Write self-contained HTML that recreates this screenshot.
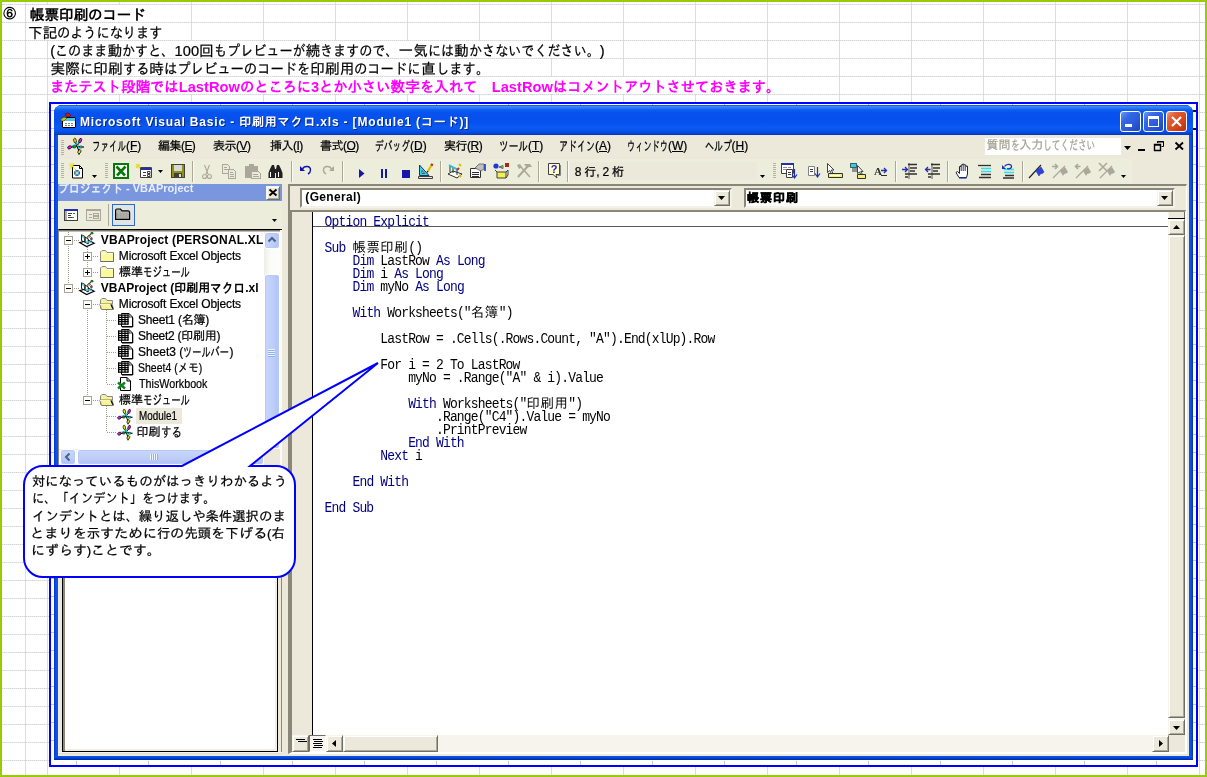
<!DOCTYPE html>
<html lang="ja"><head><meta charset="utf-8"><title>帳票印刷のコード</title>
<style>
*{box-sizing:border-box}
html,body{margin:0;padding:0}
body{width:1207px;height:777px;overflow:hidden;background:#fff;position:relative;
 font-family:"Liberation Sans","IPAGothic",sans-serif;color:#000}
.a{position:absolute}
.t{position:absolute;white-space:pre;line-height:1;-webkit-text-stroke:0.22px currentColor}
.ui{font-size:12px}
.k{display:inline-block;white-space:pre;vertical-align:baseline}
.k>span{display:inline-block;transform-origin:0 50%;white-space:pre}
.gl{position:absolute;background:#dcdce0}
.gh{position:absolute;left:2px;width:1203px;height:1px;background:repeating-linear-gradient(to right,#d4d4dc 0,#d4d4dc 1px,#e8e8ee 1px,#e8e8ee 2px)}
.beige{background:#ece8da}
.tbg{background:#ededdc}
.sep{position:absolute;width:1px;background:#aca899;box-shadow:1px 0 0 #fbfaf4}
.grip{position:absolute;width:3px;background:repeating-linear-gradient(to bottom,#b5b2a0 0,#b5b2a0 1px,transparent 1px,transparent 2px)}
.btn{position:absolute;background:#ece8da;border:1px solid;border-color:#f7f6ee #716f64 #716f64 #f7f6ee;box-shadow:inset 1px 1px 0 #fff,inset -1px -1px 0 #aca899}
.code{position:absolute;white-space:pre;font-family:"Liberation Mono","IPAGothic",monospace;font-size:13px;line-height:13px;letter-spacing:-0.84px;color:#000;height:13px;transform:scaleY(1.16);transform-origin:0 9.96px}
.code b{font-weight:normal;color:#000080}
.code i{font-style:normal;font-size:13.4px;letter-spacing:0.56px;display:inline-block;transform:scaleY(.88);transform-origin:0 78%;color:#000}
svg{position:absolute;overflow:visible}
</style></head>
<body>
<div id="root" style="position:absolute;left:0;top:0;width:1207px;height:777px;will-change:transform">
<!-- sheet gridlines -->
<div class="gh" style="top:4px"></div><div class="gh" style="top:22px"></div><div class="gh" style="top:40px"></div><div class="gh" style="top:58px"></div><div class="gh" style="top:76px"></div><div class="gh" style="top:94px"></div><div class="gh" style="top:112px"></div><div class="gh" style="top:130px"></div><div class="gh" style="top:148px"></div><div class="gh" style="top:166px"></div><div class="gh" style="top:184px"></div><div class="gh" style="top:202px"></div><div class="gh" style="top:220px"></div><div class="gh" style="top:238px"></div><div class="gh" style="top:256px"></div><div class="gh" style="top:274px"></div><div class="gh" style="top:292px"></div><div class="gh" style="top:310px"></div><div class="gh" style="top:328px"></div><div class="gh" style="top:346px"></div><div class="gh" style="top:364px"></div><div class="gh" style="top:382px"></div><div class="gh" style="top:400px"></div><div class="gh" style="top:418px"></div><div class="gh" style="top:436px"></div><div class="gh" style="top:454px"></div><div class="gh" style="top:472px"></div><div class="gh" style="top:490px"></div><div class="gh" style="top:508px"></div><div class="gh" style="top:526px"></div><div class="gh" style="top:544px"></div><div class="gh" style="top:562px"></div><div class="gh" style="top:580px"></div><div class="gh" style="top:598px"></div><div class="gh" style="top:616px"></div><div class="gh" style="top:634px"></div><div class="gh" style="top:652px"></div><div class="gh" style="top:670px"></div><div class="gh" style="top:688px"></div><div class="gh" style="top:706px"></div><div class="gh" style="top:724px"></div><div class="gh" style="top:742px"></div><div class="gh" style="top:760px"></div><div class="gl" style="left:25px;top:2px;width:1px;height:773px"></div><div class="gl" style="left:47px;top:2px;width:1px;height:773px"></div><div class="gl" style="left:119px;top:2px;width:1px;height:773px"></div><div class="gl" style="left:191px;top:2px;width:1px;height:773px"></div><div class="gl" style="left:263px;top:2px;width:1px;height:773px"></div><div class="gl" style="left:335px;top:2px;width:1px;height:773px"></div><div class="gl" style="left:407px;top:2px;width:1px;height:773px"></div><div class="gl" style="left:479px;top:2px;width:1px;height:773px"></div><div class="gl" style="left:551px;top:2px;width:1px;height:773px"></div><div class="gl" style="left:623px;top:2px;width:1px;height:773px"></div><div class="gl" style="left:695px;top:2px;width:1px;height:773px"></div><div class="gl" style="left:767px;top:2px;width:1px;height:773px"></div><div class="gl" style="left:839px;top:2px;width:1px;height:773px"></div><div class="gl" style="left:911px;top:2px;width:1px;height:773px"></div><div class="gl" style="left:983px;top:2px;width:1px;height:773px"></div><div class="gl" style="left:1055px;top:2px;width:1px;height:773px"></div><div class="gl" style="left:1127px;top:2px;width:1px;height:773px"></div><div class="gl" style="left:1199px;top:2px;width:1px;height:773px"></div>
<div class="a" style="left:26px;top:5px;width:165px;height:17px;background:#fff"></div><div class="a" style="left:26px;top:23px;width:165px;height:17px;background:#fff"></div><div class="a" style="left:48px;top:41px;width:575px;height:17px;background:#fff"></div><div class="a" style="left:48px;top:59px;width:503px;height:17px;background:#fff"></div><div class="a" style="left:48px;top:77px;width:719px;height:17px;background:#fff"></div>
<!-- sheet text -->
<div class="t" id="r1a" style="left:3.3px;top:8.4px;font-size:12.8px;-webkit-text-stroke:0;font-weight:bold">⑥</div><div class="t" id="r1" style="left:29.8px;top:8.2px;font-size:14.67px;-webkit-text-stroke:0;font-weight:bold">帳票印刷<span class="k" style="width:57.66px"><span style="transform:scale(0.983,1)">のコード</span></span></div>
<div class="t" id="r2" style="left:28.1px;top:26.2px;font-size:14.67px;">下記<span class="k" style="width:105.39px"><span style="transform:scale(0.898,1)">のようになります</span></span></div>
<div class="t" id="r3" style="left:50.3px;top:44.2px;font-size:14.67px;">(<span class="k" style="width:52.38px"><span style="transform:scale(0.893,1)">このまま</span></span>動<span class="k" style="width:52.38px"><span style="transform:scale(0.893,1)">かすと、</span></span>100回<span class="k" style="width:91.67px"><span style="transform:scale(0.893,1)">もプレビューが</span></span>続<span class="k" style="width:78.58px"><span style="transform:scale(0.893,1)">きますので、</span></span>一気<span class="k" style="width:26.19px"><span style="transform:scale(0.893,1)">には</span></span>動<span class="k" style="width:130.96px"><span style="transform:scale(0.893,1)">かさないでください。</span></span>)</div>
<div class="t" id="r4" style="left:50.6px;top:62.2px;font-size:14.67px;">実際<span class="k" style="width:13.32px"><span style="transform:scale(0.908,1)">に</span></span>印刷<span class="k" style="width:26.64px"><span style="transform:scale(0.908,1)">する</span></span>時<span class="k" style="width:146.54px"><span style="transform:scale(0.908,1)">はプレビューのコードを</span></span>印刷用<span class="k" style="width:66.61px"><span style="transform:scale(0.908,1)">のコードに</span></span>直<span class="k" style="width:53.29px"><span style="transform:scale(0.908,1)">します。</span></span></div>
<div class="t" id="r5" style="left:50.0px;top:80.2px;font-size:14.67px;-webkit-text-stroke:0;font-weight:bold;color:#ff00ff"><span class="k" style="width:71.06px"><span style="transform:scale(0.969,1)">またテスト</span></span>段階<span class="k" style="width:28.42px"><span style="transform:scale(0.969,1)">では</span></span>LastRow<span class="k" style="width:71.06px"><span style="transform:scale(0.969,1)">のところに</span></span>3<span class="k" style="width:28.42px"><span style="transform:scale(0.969,1)">とか</span></span>小<span class="k" style="width:28.42px"><span style="transform:scale(0.969,1)">さい</span></span>数字<span class="k" style="width:14.21px"><span style="transform:scale(0.969,1)">を</span></span>入<span class="k" style="width:28.42px"><span style="transform:scale(0.969,1)">れて</span></span>　LastRow<span class="k" style="width:227.40px"><span style="transform:scale(0.969,1)">はコメントアウトさせておきます。</span></span></div>
<!-- picture frame -->
<div class="a" style="left:49px;top:102px;width:1149px;height:665px;border:2px solid #0000ff;background:#fff"></div>
<div class="a" style="left:76px;top:761px;width:1110px;height:4px;background:repeating-linear-gradient(to right,#c8c8bc 0,#c8c8bc 1px,transparent 1px,transparent 72px)"></div><div class="a" style="left:76px;top:104px;width:1110px;height:1px;background:repeating-linear-gradient(to right,#c8c8bc 0,#c8c8bc 1px,transparent 1px,transparent 72px)"></div><div class="a" style="left:51px;top:110px;width:3px;height:648px;background:repeating-linear-gradient(to bottom,#c8c8bc 0,#c8c8bc 1px,transparent 1px,transparent 18px)"></div><div class="a" style="left:1193px;top:146px;width:3px;height:612px;background:repeating-linear-gradient(to bottom,#c8c8bc 0,#c8c8bc 1px,transparent 1px,transparent 18px)"></div>
<!-- VBE window -->
<div class="a" id="win" style="left:54px;top:105px;width:1139px;height:655px;border-radius:8px 8px 0 0;background:#0046d5;overflow:hidden"><div class="a" style="left:0;top:0;width:1139px;height:655px;background:linear-gradient(to right,#0030cc 0,#0a54ec 2px,#0a50ea 4px,#0a50ea 1135px,#0a54ec 1137px,#002cb4 1139px)"></div><div class="a" style="left:0;top:651px;width:1139px;height:4px;background:linear-gradient(to bottom,#0a5ae6 0,#0046d8 2px,#00269c 4px)"></div><div class="a" style="left:0;top:0;width:1139px;height:30px;background:linear-gradient(to bottom,#0a4ad8 0,#3a88fa 1.5px,#2a7af8 3px,#0c5cf2 5px,#0752ee 8px,#0650ee 17px,#0a5af4 22px,#0852ea 26px,#0440cc 29px,#0234b4 30px)"></div></div>
<div class="a beige" id="client" style="left:58px;top:135px;width:1131px;height:621px"></div><div class="a tbg" style="left:58px;top:159px;width:1074px;height:25px"></div><div class="a tbg" style="left:58px;top:201px;width:224px;height:28px"></div>
<!-- title bar -->
<svg width="16" height="16" viewBox="0 0 16 16" style="left:61px;top:113px"><rect x="1" y="4" width="14" height="11" fill="#fff"/><path d="M1.5 4.5h13v10h-13z" fill="none" stroke="#000" stroke-width="1"/><rect x="2" y="5" width="12" height="3" fill="#40c8e8"/><rect x="4" y="10" width="2" height="1" fill="#808080"/><rect x="7" y="10" width="2" height="1" fill="#808080"/><rect x="10" y="10" width="2" height="1" fill="#808080"/><rect x="4" y="12" width="2" height="1" fill="#808080"/><rect x="7" y="12" width="2" height="1" fill="#808080"/><rect x="10" y="12" width="2" height="1" fill="#808080"/><path d="M4 1 l3 -1 3 2 -2 2 -3 -1z" fill="#d81818" stroke="#600" stroke-width="0.6"/><path d="M0 6 l3 -2 3 1 -3 3 -3 0z" fill="#c8c020" stroke="#440" stroke-width="0.6"/></svg><div class="a" style="left:1193px;top:109.5px;width:3px;height:2px;background:#111"></div><div class="a" style="left:1193px;top:127.5px;width:3px;height:2px;background:#111"></div><div class="t" id="ttl" style="left:79.9px;top:115.6px;font-size:12px;letter-spacing:0.83px;-webkit-text-stroke:0;font-weight:bold;color:#fff;text-shadow:1px 1px 0 #0a2a8a">Microsoft Visual Basic - 印刷用マクロ.xls - [Module1 (コード)]</div>
<div class="a" style="left:1120px;top:111px;width:21px;height:21px;border:1px solid #fff;border-radius:3px;background:linear-gradient(135deg,#6c98f4 0,#3568e4 30%,#2a5cdc 60%,#1c44bc 100%)"><div class="a" style="left:4px;top:12px;width:7px;height:3px;background:#fff"></div></div><div class="a" style="left:1143px;top:111px;width:21px;height:21px;border:1px solid #fff;border-radius:3px;background:linear-gradient(135deg,#6c98f4 0,#3568e4 30%,#2a5cdc 60%,#1c44bc 100%)"><div class="a" style="left:4px;top:4px;width:11px;height:11px;border:1px solid #fff;border-top-width:3px"></div></div><div class="a" style="left:1166px;top:111px;width:21px;height:21px;border:1px solid #fff;border-radius:3px;background:linear-gradient(135deg,#f0a080 0,#e0603a 25%,#d8481c 60%,#b8300c 100%)"><svg width="19" height="19" style="left:0;top:0"><path d="M5 5 L14 14 M14 5 L5 14" stroke="#fff" stroke-width="2.2" fill="none"/></svg></div>

<!-- menu bar -->
<div class="grip" style="left:61px;top:140px;height:15px"></div><svg width="17" height="16" viewBox="0 0 17 16" style="left:67px;top:138px"><path d="M10 8 L8 3 M10 8 L13 3 M10 8 L3 9.5 M10 8 L15 9 M10 8 L12.3 14" fill="none" stroke="#000" stroke-width="1.1"/><path d="M4 8.2 L10 6 M10 6.5 L12.5 11.5 M8.5 5 L12 5" fill="none" stroke="#20d0d8" stroke-width="1"/><ellipse cx="8" cy="2.6" rx="1.3" ry="2.4" fill="#f0e800" stroke="#000" stroke-width=".7" transform="rotate(-12 8 2.6)"/><ellipse cx="13.2" cy="2.6" rx="1.3" ry="2.4" fill="#e020e0" stroke="#000" stroke-width=".7" transform="rotate(22 13.2 2.6)"/><ellipse cx="2.6" cy="9.4" rx="2" ry="1.5" fill="#e020e0" stroke="#000" stroke-width=".7" transform="rotate(-25 2.6 9.4)"/><ellipse cx="7.4" cy="8.8" rx="1.7" ry="1.2" fill="#10b020" stroke="#000" stroke-width=".5"/><ellipse cx="13.8" cy="9" rx="1.6" ry="1.1" fill="#20d0d8" stroke="#000" stroke-width=".5"/><rect x="15.4" y="8.3" width="1.4" height="1.4" fill="#000"/><ellipse cx="12.4" cy="13.6" rx="1.4" ry="2" fill="#f0e800" stroke="#000" stroke-width=".7" transform="rotate(25 12.4 13.6)"/><rect x="11.2" y="15.4" width="1.5" height="1.2" fill="#000"/></svg><div class="t ui" id="m0" style="left:92.0px;top:139.6px;font-size:12px;"><span class="k" style="width:34.00px"><span style="transform:translateY(0.7px) scale(0.708,1.12)">ファイル</span></span>(<u>F</u>)</div><div class="t ui" id="m1" style="left:158.0px;top:139.6px;font-size:12px;letter-spacing:-0.54px;">編集(<u>E</u>)</div><div class="t ui" id="m2" style="left:213.0px;top:139.6px;font-size:12px;letter-spacing:-0.50px;">表示(<u>V</u>)</div><div class="t ui" id="m3" style="left:270.0px;top:139.6px;font-size:12px;letter-spacing:-0.50px;">挿入(<u>I</u>)</div><div class="t ui" id="m4" style="left:320.0px;top:139.6px;font-size:12px;letter-spacing:-0.50px;">書式(<u>O</u>)</div><div class="t ui" id="m5" style="left:375.0px;top:139.6px;font-size:12px;"><span class="k" style="width:34.98px"><span style="transform:translateY(0.7px) scale(0.729,1.12)">デバッグ</span></span>(<u>D</u>)</div><div class="t ui" id="m6" style="left:444.0px;top:139.6px;font-size:12px;letter-spacing:-0.50px;">実行(<u>R</u>)</div><div class="t ui" id="m7" style="left:499.0px;top:139.6px;font-size:12px;"><span class="k" style="width:28.99px"><span style="transform:translateY(0.7px) scale(0.805,1.12)">ツール</span></span>(<u>T</u>)</div><div class="t ui" id="m8" style="left:559.0px;top:139.6px;font-size:12px;"><span class="k" style="width:36.00px"><span style="transform:translateY(0.7px) scale(0.750,1.12)">アドイン</span></span>(<u>A</u>)</div><div class="t ui" id="m9" style="left:627.0px;top:139.6px;font-size:12px;"><span class="k" style="width:41.00px"><span style="transform:translateY(0.7px) scale(0.683,1.12)">ウィンドウ</span></span>(<u>W</u>)</div><div class="t ui" id="m10" style="left:704.5px;top:139.6px;font-size:12px;"><span class="k" style="width:27.00px"><span style="transform:translateY(0.7px) scale(0.750,1.12)">ヘルプ</span></span>(<u>H</u>)</div>
<div class="a" style="left:985px;top:138px;width:136px;height:17px;background:#fff"></div><div class="t ui" id="ask" style="left:986.6px;top:139.2px;font-size:12px;color:#a5a294">質問<span class="k" style="width:8.72px"><span style="transform:translateY(0.7px) scale(0.727,1.12)">を</span></span>入力<span class="k" style="width:52.34px"><span style="transform:translateY(0.7px) scale(0.727,1.12)">してください</span></span></div><svg width="7" height="4" style="left:1124px;top:146px"><path d="M0 0h7l-3.5 4z" fill="#000"/></svg><div class="a" style="left:1138px;top:149px;width:7px;height:2px;background:#000"></div><svg width="10" height="10" style="left:1154px;top:141px"><path d="M3.5 0.5h6v5h-2 M3.5 2v-1.5 M3 1h7" stroke="#000" fill="none" stroke-width="1"/><path d="M0.5 3.5h6v6h-6z M0 4h7" stroke="#000" fill="none" stroke-width="1.4"/></svg><svg width="9" height="8" style="left:1175px;top:142px"><path d="M0.5 0.5 L8 7.5 M8 0.5 L0.5 7.5" stroke="#000" stroke-width="1.8" fill="none"/></svg>

<!-- standard toolbar -->
<div class="grip" style="left:61px;top:163px;height:16px"></div><div class="grip" style="left:105px;top:163px;height:16px"></div><div class="grip" style="left:773px;top:163px;height:16px"></div><div class="sep" style="left:192px;top:161px;height:21px"></div><div class="sep" style="left:291px;top:161px;height:21px"></div><div class="sep" style="left:342px;top:161px;height:21px"></div><div class="sep" style="left:440px;top:161px;height:21px"></div><div class="sep" style="left:538px;top:161px;height:21px"></div><div class="sep" style="left:567px;top:161px;height:21px"></div><div class="sep" style="left:895px;top:161px;height:21px"></div><div class="sep" style="left:947px;top:161px;height:21px"></div><div class="sep" style="left:1022px;top:161px;height:21px"></div>
<svg width="16" height="16" viewBox="0 0 16 16" style="left:69px;top:163px"><path d="M3.5 2.5h7l3 3v9.5h-10z" fill="#fff" stroke="#000" stroke-width="1"/><path d="M10.5 2.5v3h3" fill="none" stroke="#000" stroke-width="1"/><circle cx="8" cy="10" r="2.6" fill="#30b0d8" stroke="#404040" stroke-width=".8"/><path d="M6.4 8.4l3.2 3.2M9.6 8.4l-3.2 3.2" fill="none" stroke="#e8e8e8" stroke-width="0.8"/><path d="M0 0l7 7M5 0l-3 5M3 -0.5v5M0 3h5M0.5 6l2-2" fill="none" stroke="#f0e000" stroke-width="0.9"/></svg><svg width="5" height="3" style="left:92px;top:175px"><path d="M0 0h5l-2.5 3z" fill="#000"/></svg><svg width="16" height="16" viewBox="0 0 16 16" style="left:113px;top:163px"><rect x="0" y="0" width="16" height="16" fill="#087808"/><rect x="2" y="2" width="12" height="12" fill="#fff"/><path d="M3.5 3.5 L12 12.5 M12.5 3.5 L4 12.5" fill="none" stroke="#087808" stroke-width="2.6"/></svg><svg width="16" height="16" viewBox="0 0 16 16" style="left:136px;top:163px"><rect x="4" y="4" width="12" height="11" fill="#fff"/><path d="M4.5 4.5h11v10h-11z" fill="none" stroke="#404040" stroke-width="1"/><rect x="5" y="5" width="10" height="2" fill="#2030b0"/><path d="M7 9.5h3M7 12.5h3" fill="none" stroke="#404040" stroke-width="1"/><path d="M11.5 8.5h2.5v2h-2.5zM11.5 11.5h2.5v2h-2.5z" fill="#fff" stroke="#404040" stroke-width="1"/><path d="M0 1l4 4M4 1l-4 4M2 0.5v5M-0.5 3h5" fill="none" stroke="#e8d800" stroke-width="0.9"/></svg><svg width="5" height="3" style="left:158px;top:170px"><path d="M0 0h5l-2.5 3z" fill="#000"/></svg><svg width="14" height="15" viewBox="0 0 14 15" style="left:171px;top:163px" shape-rendering="crispEdges"><rect x="0" y="1" width="14" height="14" fill="#404040"/><rect x="1" y="2" width="12" height="12" fill="#909010"/><rect x="3" y="2" width="8" height="6" fill="#d8d8d8"/><rect x="3" y="10" width="8" height="5" fill="#404040"/><rect x="8" y="11" width="2" height="3" fill="#e0e0e0"/></svg><svg width="10" height="16" viewBox="0 0 10 16" style="left:202px;top:164px"><path d="M2.5 1 L6 10 M7.5 1 L4 10" fill="none" stroke="#aca899" stroke-width="1.1"/><circle cx="2.6" cy="12.5" r="2" fill="none" stroke="#aca899" stroke-width="1.1"/><circle cx="7.4" cy="12.5" r="2" fill="none" stroke="#aca899" stroke-width="1.1"/></svg><svg width="15" height="16" viewBox="0 0 15 16" style="left:222px;top:163px" shape-rendering="crispEdges"><path d="M0.5 1.5h5l2 2v6.5h-7z" fill="#ece8da" stroke="#aca899" stroke-width="1"/><path d="M2 4.5h3M2 6.5h4" fill="none" stroke="#aca899" stroke-width="1"/><path d="M6.5 6.5h5l2 2v6.5h-7z" fill="#ece8da" stroke="#aca899" stroke-width="1"/><path d="M8 9.5h3M8 11.5h4M8 13.5h4" fill="none" stroke="#aca899" stroke-width="1"/></svg><svg width="16" height="16" viewBox="0 0 16 16" style="left:245px;top:163px" shape-rendering="crispEdges"><rect x="0" y="3" width="13" height="12" fill="#aca899"/><rect x="4" y="1" width="5" height="3" fill="#aca899"/><path d="M6.5 8.5h7l2 2v5h-9z" fill="#ece8da" stroke="#aca899" stroke-width="1"/><path d="M8 11.5h5M8 13.5h6" fill="none" stroke="#aca899" stroke-width="1"/></svg><svg width="15" height="15" viewBox="0 0 15 15" style="left:268px;top:164px"><path d="M2 5 L4 1 H6 L7 5 V14 H0.5 V9 Z" fill="#202020"/><path d="M13 5 L11 1 H9 L8 5 V14 H14.5 V9 Z" fill="#202020"/><rect x="6" y="5" width="3" height="4" fill="#202020"/><rect x="2" y="8" width="1" height="5" fill="#fff"/><rect x="10" y="8" width="1" height="5" fill="#fff"/></svg>
<svg width="13" height="10" viewBox="0 0 13 10" style="left:299px;top:165px"><path d="M1 1 V6 H6 Z" fill="#1010b0"/><path d="M3.5 4 C5 0.5 11.5 0.5 11.5 5 C11.5 7.5 10 8.5 9 9" fill="none" stroke="#1010b0" stroke-width="1.4"/></svg><svg width="13" height="10" viewBox="0 0 13 10" style="left:322px;top:165px"><path d="M12 1 V6 H7 Z" fill="#aca899"/><path d="M9.5 4 C8 0.5 1.5 0.5 1.5 5 C1.5 7.5 3 8.5 4 9" fill="none" stroke="#aca899" stroke-width="1.4"/></svg><svg width="6" height="9" viewBox="0 0 6 9" style="left:359px;top:169px"><path d="M0 0 L5.5 4.5 L0 9z" fill="#1818a8"/></svg><svg width="7" height="9" viewBox="0 0 7 9" style="left:381px;top:169px" shape-rendering="crispEdges"><rect x="0" y="0" width="2" height="9" fill="#1818a8"/><rect x="4" y="0" width="2" height="9" fill="#1818a8"/></svg><svg width="8" height="8" viewBox="0 0 8 8" style="left:402px;top:170px" shape-rendering="crispEdges"><rect x="0" y="0" width="8" height="8" fill="#1818a8"/></svg><svg width="16" height="16" viewBox="0 0 16 16" style="left:418px;top:163px"><path d="M1.5 12.5 V2 L11 12.5 Z" fill="#30d8e8" stroke="#203060" stroke-width="1"/><path d="M4 10.5 V7.5 L6.7 10.5z" fill="#ece8da" stroke="#203060" stroke-width="0.7"/><rect x="0" y="13" width="15" height="3" fill="#e8e8e8"/><path d="M0.5 13.5h14v2h-14z" fill="none" stroke="#404040" stroke-width="1"/><path d="M10 8 L14 1.5" fill="none" stroke="#d8c000" stroke-width="2.2"/><path d="M13.4 2.6 L14.4 0.8" fill="none" stroke="#d02020" stroke-width="2.2"/><path d="M9.2 9.4 L10 8" fill="none" stroke="#202020" stroke-width="1.4"/></svg>
<svg width="16" height="16" viewBox="0 0 16 16" style="left:447px;top:163px"><path d="M1 11 L6 8 L15 11 L10 15 Z" fill="#fff" stroke="#303030" stroke-width="1"/><path d="M3 3 L3 9 M3 3 L10 6 L10 12 M6 4.5 V10" fill="none" stroke="#303030" stroke-width="1"/><path d="M2 2 L11 7" fill="none" stroke="#20c8d8" stroke-width="2"/><path d="M12 1 l2 2" fill="none" stroke="#d8c000" stroke-width="2"/><path d="M10 7 l2 -2" fill="none" stroke="#d82020" stroke-width="2"/><path d="M12 12 l2 2" fill="none" stroke="#d8c000" stroke-width="2"/></svg><svg width="16" height="16" viewBox="0 0 16 16" style="left:470px;top:163px"><rect x="0" y="5" width="11" height="10" fill="#fff"/><path d="M0.5 5.5h10v9h-10z" fill="none" stroke="#303030" stroke-width="1"/><path d="M2 9.5h7M2 11.5h7M2 13.5h7" fill="none" stroke="#303030" stroke-width="1"/><path d="M5 5 L9 1 H14 V6 L11 8 Z" fill="#c0c0c0" stroke="#606060" stroke-width="0.8"/><path d="M15 1 V8" fill="none" stroke="#2030c0" stroke-width="1.6"/></svg><svg width="16" height="16" viewBox="0 0 16 16" style="left:493px;top:163px"><circle cx="3" cy="3" r="2.6" fill="#2038d8"/><rect x="12" y="0" width="4" height="4" fill="#b02020"/><path d="M6 4 L10 2.5 V5.5z" fill="#fff" stroke="#404040" stroke-width="0.8"/><rect x="8" y="3.4" width="1.4" height="1.4" fill="#10a020"/><path d="M4 9 H13 V15 H4 Z" fill="#f0f050" stroke="#404040" stroke-width="1"/><path d="M4 9 L2 7 M13 9 L15 7 V12 L13 15" fill="none" stroke="#404040" stroke-width="1"/></svg><svg width="16" height="16" viewBox="0 0 16 16" style="left:516px;top:163px"><path d="M2 14 L12 3" fill="none" stroke="#aca899" stroke-width="2"/><path d="M14 14 L5 4" fill="none" stroke="#aca899" stroke-width="1.6"/><path d="M8 1 L14 1 L16 4 L13 4 L11 5 Z" fill="#aca899"/><path d="M1 2 L4 1 L6 4 L3 6 Z" fill="#aca899"/></svg><svg width="15" height="16" viewBox="0 0 15 16" style="left:547px;top:163px"><path d="M1.5 0.5 H12.5 V11.5 H9 L10 15 L6 11.5 H1.5 Z" fill="#ffffd0" stroke="#404040" stroke-width="1"/><path d="M13.5 2 V12.5 H10.5" fill="none" stroke="#808080" stroke-width="1"/><text x="7" y="10" font-family="Liberation Sans,sans-serif" font-size="11" font-weight="bold" fill="#2020c0" text-anchor="middle">?</text></svg>
<div class="a beige" style="left:570px;top:162px;width:187px;height:18px"></div><div class="t ui" id="pos" style="left:574.7px;top:166.2px;font-size:12px;letter-spacing:-0.18px;">8 行, 2 桁</div><svg width="5" height="3" style="left:760px;top:175px"><path d="M0 0h5l-2.5 3z" fill="#000"/></svg><svg width="16" height="16" viewBox="0 0 16 16" style="left:781px;top:163px"><rect x="0" y="0" width="13" height="11" fill="#fff"/><path d="M0.5 0.5h12v10h-12z" fill="none" stroke="#404040" stroke-width="1"/><rect x="0" y="0" width="13" height="2" fill="#2030b0"/><path d="M2 4.5h4M2 6.5h3M7 4.5h3" fill="none" stroke="#909090" stroke-width="1"/><rect x="5" y="6" width="7" height="9" fill="#fff"/><path d="M5.5 6.5h6v8h-6z" fill="none" stroke="#404040" stroke-width="1"/><path d="M7 9.5h3M7 11.5h3" fill="none" stroke="#404040" stroke-width="1"/><path d="M13.5 6 V14 M11 11.5 L13.5 15 L16 11.5" fill="none" stroke="#2030b0" stroke-width="1.2"/></svg><svg width="12" height="14" viewBox="0 0 12 14" style="left:808px;top:164px"><rect x="0" y="2" width="7" height="10" fill="#fff"/><path d="M0.5 2.5h6v9h-6z" fill="none" stroke="#808080" stroke-width="1"/><path d="M2 5.5h3M2 7.5h3" fill="none" stroke="#404040" stroke-width="1"/><path d="M9.5 3 V12 M7 9.5 L9.5 13 L12 9.5" fill="none" stroke="#2030b0" stroke-width="1.2"/></svg><svg width="16" height="16" viewBox="0 0 16 16" style="left:827px;top:163px"><path d="M0.5 0.5 V9.5 L2.8 7.5 L4.6 11 L6 10.3 L4.3 7 L7 7 Z" fill="#fff" stroke="#303030" stroke-width="0.9"/><rect x="1" y="10" width="15" height="5" fill="#f4f070"/><path d="M1.5 10.5h14v4h-14z" fill="none" stroke="#303030" stroke-width="1"/><path d="M3 12.5h10" fill="none" stroke="#fff" stroke-width="1"/></svg><svg width="16" height="16" viewBox="0 0 16 16" style="left:850px;top:163px"><rect x="0" y="0" width="7" height="5" fill="#30d0e0"/><path d="M0.5 0.5h6v4h-6z" fill="none" stroke="#404040" stroke-width="0.8"/><rect x="2" y="5" width="6" height="4" fill="#909090"/><path d="M7.5 2.5 V10.5 L9.5 9 L11 12 L12.3 11.4 L10.8 8.5 L13 8.5 Z" fill="#fff" stroke="#303030" stroke-width="0.9"/><rect x="7" y="11" width="9" height="5" fill="#f4f070"/><path d="M7.5 11.5h8v4h-8z" fill="none" stroke="#303030" stroke-width="1"/></svg><svg width="14" height="10" viewBox="0 0 14 10" style="left:874px;top:166px"><text x="0" y="9" font-family="Liberation Serif,serif" font-size="11" font-weight="bold" fill="#303030">A</text><path d="M7 4.5 H12 M10 2 L12.5 4.5 L10 7" fill="none" stroke="#2030b0" stroke-width="1.3"/><path d="M7 9.5h6" fill="none" stroke="#303030" stroke-width="1"/></svg>
<svg width="16" height="16" viewBox="0 0 16 16" style="left:902px;top:163px"><path d="M6 1.5h9M8 5h7M8 8h5M3 11h12M3 14h3" fill="none" stroke="#303030" stroke-width="1.5"/><path d="M0 6.5 H5 M3 4 L5.5 6.5 L3 9" fill="none" stroke="#2030b0" stroke-width="1.3"/><path d="M7 0 V16" fill="none" stroke="#303030" stroke-width="0.8"/></svg><svg width="16" height="16" viewBox="0 0 16 16" style="left:925px;top:163px"><path d="M6 1.5h9M8 5h7M8 8h5M3 11h12M3 14h3" fill="none" stroke="#303030" stroke-width="1.5"/><path d="M0.5 6.5 H5.5 M3 4 L0.5 6.5 L3 9" fill="none" stroke="#2030b0" stroke-width="1.3"/><path d="M7 0 V16" fill="none" stroke="#303030" stroke-width="0.8"/></svg><svg width="14" height="16" viewBox="0 0 14 16" style="left:955px;top:163px"><path d="M4 14.5 L1 9.5 L2.5 8.5 L4.5 10.5 V3.5 H6 V2 H7.5 V1.2 H9.2 V2 H10.8 V3.2 H12.5 V11 L11.5 14.5 Z" fill="#fff" stroke="#202040" stroke-width="1"/><path d="M6.2 3 V8 M8.2 2 V8 M10.2 3 V8" fill="none" stroke="#202040" stroke-width="0.9"/><path d="M4 15 H11.5" fill="none" stroke="#2030b0" stroke-width="1.2"/></svg><svg width="14" height="15" viewBox="0 0 14 15" style="left:978px;top:164px"><path d="M0 1.5h13" fill="none" stroke="#303030" stroke-width="1.3"/><path d="M3 4.5h10M3 7.5h10" fill="none" stroke="#30e0f0" stroke-width="1.5"/><path d="M3 10.5h10M1 13.5h12" fill="none" stroke="#303030" stroke-width="1.3"/></svg><svg width="14" height="16" viewBox="0 0 14 16" style="left:1001px;top:163px"><path d="M3 6.5h10M3 9.5h10" fill="none" stroke="#30e0f0" stroke-width="1.5"/><path d="M4 12.5h9M2 15h11" fill="none" stroke="#303030" stroke-width="1.3"/><path d="M3.5 3.5 C5 0.5 11 0.5 10.5 4 C10 6 7 6 6 5.5" fill="none" stroke="#2030b0" stroke-width="1.2"/><path d="M1 2 V6 H5 Z" fill="#2030b0"/></svg>
<svg width="16" height="15" viewBox="0 0 16 15" style="left:1029px;top:164px"><path d="M0 14 L12 1" fill="none" stroke="#202020" stroke-width="1.2"/><path d="M7 7 C9 3 10 6 12 3 L15 8 C13 11 12 8 10 12 Z" fill="#3040e0" stroke="#2030a0" stroke-width="0.6"/></svg><svg width="16" height="16" viewBox="0 0 16 16" style="left:1052px;top:163px"><path d="M1 15 L13 3" fill="none" stroke="#aca899" stroke-width="1.2"/><path d="M8 8 C10 4 11 7 13 4 L16 9 C14 12 13 9 11 13 Z" fill="#aca899"/><path d="M0 3.5 H5 M3 1 L5.5 3.5 L3 6" fill="none" stroke="#aca899" stroke-width="1.6"/></svg><svg width="16" height="16" viewBox="0 0 16 16" style="left:1075px;top:163px"><path d="M1 15 L13 3" fill="none" stroke="#aca899" stroke-width="1.2"/><path d="M8 8 C10 4 11 7 13 4 L16 9 C14 12 13 9 11 13 Z" fill="#aca899"/><path d="M0.5 3.5 H5.5 M3 1 L0.5 3.5 L3 6" fill="none" stroke="#aca899" stroke-width="1.6"/></svg><svg width="16" height="16" viewBox="0 0 16 16" style="left:1099px;top:163px"><path d="M1 15 L13 3" fill="none" stroke="#aca899" stroke-width="1.2"/><path d="M8 8 C10 4 11 7 13 4 L16 9 C14 12 13 9 11 13 Z" fill="#aca899"/><path d="M0 0 L8 8 M8 0 L0 8" fill="none" stroke="#aca899" stroke-width="1.6"/></svg><svg width="5" height="3" style="left:1121px;top:175px"><path d="M0 0h5l-2.5 3z" fill="#000"/></svg>

<!-- project explorer -->
<div class="a" style="left:58px;top:184px;width:224px;height:17px;background:#7a96df"></div><div class="t" id="pcap" style="left:58.0px;top:182.6px;font-size:11px;-webkit-text-stroke:0;font-weight:bold;color:#e8eefc"><span class="k" style="width:65.00px"><span style="transform:translateY(0.7px) scale(0.985,1.12)">プロジェクト</span></span> - VBAProject</div><div class="btn" style="left:266px;top:186px;width:14px;height:14px"><svg width="8" height="7" style="left:2px;top:2px"><path d="M0.5 0.5 L7.5 6.5 M7.5 0.5 L0.5 6.5" stroke="#000" stroke-width="1.9" fill="none"/></svg></div>
<svg width="14" height="12" viewBox="0 0 14 12" style="left:64px;top:209px" shape-rendering="crispEdges"><rect x="0" y="0" width="14" height="12" fill="#fff"/><path d="M0.5 0.5h13v11h-13z" fill="none" stroke="#404040" stroke-width="1"/><rect x="0" y="0" width="14" height="2" fill="#2030b0"/><rect x="1" y="2" width="2" height="9" fill="#b0b0b0"/><path d="M4 4.5h4M4 6.5h3M4 8.5h4" fill="none" stroke="#404040" stroke-width="1"/><path d="M9 4.5h2M8 8.5h2" fill="none" stroke="#10a020" stroke-width="1"/></svg><svg width="15" height="12" viewBox="0 0 15 12" style="left:86px;top:209px" shape-rendering="crispEdges"><path d="M0.5 0.5h14v11h-14z" fill="#ece8da" stroke="#aca899" stroke-width="1"/><rect x="0" y="0" width="15" height="2" fill="#aca899"/><path d="M3 5.5h3M3 8.5h3" fill="none" stroke="#aca899" stroke-width="1"/><path d="M7.5 4.5h5v2h-5zM7.5 7.5h5v2h-5z" fill="none" stroke="#aca899" stroke-width="1"/></svg><div class="sep" style="left:108px;top:204px;height:22px;box-shadow:none"></div><div class="a" style="left:112px;top:204px;width:23px;height:22px;border:1px solid #316ac5;background:#dfe4e4"></div><svg width="16" height="13" viewBox="0 0 16 13" style="left:115px;top:208px"><path d="M0.6 11.4 V2.5 Q0.6 1 2 1 H5.5 L7 2.8 H13 Q14.6 2.8 14.6 4.4 V11.4 Z" fill="#b6b6b0" stroke="#000" stroke-width="1.2"/><path d="M2.5 5 V10.5M4 5 V10.5M5.5 5 V10.5M7 5 V10.5M8.5 5 V10.5M10 5 V10.5M11.5 5 V10.5M13 5 V10.5" fill="none" stroke="#94948e" stroke-width="0.5"/></svg><svg width="5" height="3" style="left:272px;top:219px"><path d="M0 0h5l-2.5 3z" fill="#000"/></svg>
<div class="a" style="left:58px;top:229px;width:224px;height:236px;background:#fff;border-top:1px solid #000;border-left:1px solid #8c8978"></div><div class="a" style="left:59px;top:230px;width:221px;height:2px;background:linear-gradient(to bottom,#7d7a6c 0,#7d7a6c 1px,#c2bfb2 1px,#c2bfb2 2px)"></div><div class="a" style="left:280px;top:230px;width:2px;height:235px;background:#fbfaf6"></div><div class="a" style="left:264px;top:232px;width:16px;height:217px;background:linear-gradient(to right,#eeede5,#fbfbf8 40%,#fdfdfb)"></div><div class="a" style="left:264px;top:232px;width:16px;height:17px;border:1px solid #fff;border-radius:3px;background:linear-gradient(to right,#c9d7fc,#bccdf9 60%,#b0c2f4);box-shadow:inset 0 0 0 1px #b7caf5"><svg width="8" height="5" style="left:3px;top:4px"><path d="M0.5 4.5 L4 1 L7.5 4.5" stroke="#4d6185" stroke-width="2" fill="none"/></svg></div><div class="a" style="left:264px;top:274px;width:16px;height:158px;border:1px solid #fff;border-radius:3px;background:linear-gradient(to right,#c9d7fc,#bccdf9 60%,#b0c2f4);box-shadow:inset 0 0 0 1px #b7caf5"></div><div class="a" style="left:268px;top:349px;width:7px;height:8px;background:repeating-linear-gradient(to bottom,#eef4fe 0,#eef4fe 1px,#8cb0f8 1px,#8cb0f8 2px)"></div><div class="a" style="left:264px;top:433px;width:16px;height:16px;border:1px solid #fff;border-radius:3px;background:linear-gradient(to right,#c9d7fc,#bccdf9 60%,#b0c2f4);box-shadow:inset 0 0 0 1px #b7caf5"><svg width="8" height="5" style="left:3px;top:5px"><path d="M0.5 0.5 L4 4 L7.5 0.5" stroke="#4d6185" stroke-width="2" fill="none"/></svg></div><div class="a" style="left:59px;top:449px;width:205px;height:16px;background:linear-gradient(to bottom,#eeede5,#fbfbf8 40%,#fdfdfb)"></div><div class="a" style="left:60px;top:449px;width:16px;height:16px;border:1px solid #fff;border-radius:3px;background:linear-gradient(to bottom,#c9d7fc,#bccdf9 60%,#b0c2f4);box-shadow:inset 0 0 0 1px #b7caf5"><svg width="5" height="8" style="left:4px;top:3px"><path d="M4.5 0.5 L1 4 L4.5 7.5" stroke="#4d6185" stroke-width="2" fill="none"/></svg></div><div class="a" style="left:77px;top:449px;width:170px;height:16px;border:1px solid #fff;border-radius:3px;background:linear-gradient(to bottom,#c9d7fc,#bccdf9 60%,#b0c2f4);box-shadow:inset 0 0 0 1px #b7caf5"></div><div class="a" style="left:150px;top:454px;width:8px;height:6px;background:repeating-linear-gradient(to right,#eef4fe 0,#eef4fe 1px,#8cb0f8 1px,#8cb0f8 2px)"></div><div class="a" style="left:248px;top:449px;width:16px;height:16px;border:1px solid #fff;border-radius:3px;background:linear-gradient(to bottom,#c9d7fc,#bccdf9 60%,#b0c2f4);box-shadow:inset 0 0 0 1px #b7caf5"></div><div class="a beige" style="left:264px;top:449px;width:16px;height:16px"></div>
<!-- tree -->
<div class="a" style="left:68px;top:232px;width:1px;height:4px;background:repeating-linear-gradient(to bottom,#a09d8c 0,#a09d8c 1px,transparent 1px,transparent 2px)"></div><div class="a" style="left:68px;top:246px;width:1px;height:38px;background:repeating-linear-gradient(to bottom,#a09d8c 0,#a09d8c 1px,transparent 1px,transparent 2px)"></div><div class="a" style="left:87px;top:247px;width:1px;height:5px;background:repeating-linear-gradient(to bottom,#a09d8c 0,#a09d8c 1px,transparent 1px,transparent 2px)"></div><div class="a" style="left:87px;top:262px;width:1px;height:6px;background:repeating-linear-gradient(to bottom,#a09d8c 0,#a09d8c 1px,transparent 1px,transparent 2px)"></div><div class="a" style="left:87px;top:310px;width:1px;height:86px;background:repeating-linear-gradient(to bottom,#a09d8c 0,#a09d8c 1px,transparent 1px,transparent 2px)"></div><div class="a" style="left:106px;top:310px;width:1px;height:74px;background:repeating-linear-gradient(to bottom,#a09d8c 0,#a09d8c 1px,transparent 1px,transparent 2px)"></div><div class="a" style="left:106px;top:406px;width:1px;height:26px;background:repeating-linear-gradient(to bottom,#a09d8c 0,#a09d8c 1px,transparent 1px,transparent 2px)"></div><div class="a" style="left:64px;top:236px;width:9px;height:9px;border:1px solid #a8a594;background:#fff"><div class="a" style="left:1px;top:3px;width:5px;height:1px;background:#000"></div></div><div class="a" style="left:74px;top:240px;width:5px;height:1px;background:repeating-linear-gradient(to right,#a09d8c 0,#a09d8c 1px,transparent 1px,transparent 2px)"></div><svg width="16" height="16" viewBox="0 0 16 16" style="left:79px;top:232px"><path d="M0.6 10.6 L7.6 14.6 L15.2 11.2 L9 8.2 Z" fill="#fff" stroke="#000" stroke-width="1.1"/><path d="M2.5 2.8 L5.8 4.4 V10.2 L2.5 8.6 Z" fill="#fff" stroke="#000" stroke-width="0.9"/><path d="M2.9 3.6 L5.4 4.9 V6.4 L2.9 5.1Z" fill="#30d8e8"/><path d="M6.2 5.2 L9.2 6.8 V12 L6.2 10.4 Z" fill="#fff" stroke="#000" stroke-width="0.9"/><path d="M6.6 8.6 L8.8 9.8 V11.2 L6.6 10Z" fill="#30d8e8"/><path d="M9.5 9.5 L13 11" fill="none" stroke="#30d8e8" stroke-width="1.4"/><path d="M8 5.5 L13 1" fill="none" stroke="#000" stroke-width="0.9"/><ellipse cx="13" cy="1.2" rx="1.3" ry="0.9" fill="#10c020" stroke="#000" stroke-width=".5"/><ellipse cx="10.2" cy="4.3" rx="1.3" ry="0.9" fill="#f0e800" stroke="#000" stroke-width=".5"/><ellipse cx="12.4" cy="6.8" rx="0.9" ry="1.3" fill="#e020e0" stroke="#000" stroke-width=".5"/></svg><div class="t ui" id="tr0" style="left:100.8px;top:233.9px;font-size:12px;letter-spacing:0.17px;-webkit-text-stroke:0;font-weight:bold;">VBAProject (PERSONAL.XL</div>
<div class="a" style="left:83px;top:252px;width:9px;height:9px;border:1px solid #a8a594;background:#fff"><div class="a" style="left:1px;top:3px;width:5px;height:1px;background:#000"></div><div class="a" style="left:3px;top:1px;width:1px;height:5px;background:#000"></div></div><div class="a" style="left:93px;top:256px;width:6px;height:1px;background:repeating-linear-gradient(to right,#a09d8c 0,#a09d8c 1px,transparent 1px,transparent 2px)"></div><svg width="16" height="16" viewBox="0 0 16 16" style="left:99px;top:248px"><path d="M1.5 13.5 V4 L3 2.5 H6.5 L8 4.5 H14.5 V13.5 Z" fill="#fafa98" stroke="#8a8a8a" stroke-width="1"/><path d="M2.5 5.5 H13.5" fill="none" stroke="#fffff4" stroke-width="1"/><path d="M1.5 13.5 H14.5 V5" fill="none" stroke="#6c6c6c" stroke-width="1"/></svg><div class="t ui" id="tr1" style="left:118.8px;top:249.9px;font-size:12px;letter-spacing:-0.14px;">Microsoft Excel Objects</div>
<div class="a" style="left:83px;top:268px;width:9px;height:9px;border:1px solid #a8a594;background:#fff"><div class="a" style="left:1px;top:3px;width:5px;height:1px;background:#000"></div><div class="a" style="left:3px;top:1px;width:1px;height:5px;background:#000"></div></div><div class="a" style="left:93px;top:272px;width:6px;height:1px;background:repeating-linear-gradient(to right,#a09d8c 0,#a09d8c 1px,transparent 1px,transparent 2px)"></div><svg width="16" height="16" viewBox="0 0 16 16" style="left:99px;top:264px"><path d="M1.5 13.5 V4 L3 2.5 H6.5 L8 4.5 H14.5 V13.5 Z" fill="#fafa98" stroke="#8a8a8a" stroke-width="1"/><path d="M2.5 5.5 H13.5" fill="none" stroke="#fffff4" stroke-width="1"/><path d="M1.5 13.5 H14.5 V5" fill="none" stroke="#6c6c6c" stroke-width="1"/></svg><div class="t ui" id="tr2" style="left:119.0px;top:265.9px;font-size:12px;">標準<span class="k" style="width:47.00px"><span style="transform:translateY(0.7px) scale(0.783,1.12)">モジュール</span></span></div>
<div class="a" style="left:64px;top:284px;width:9px;height:9px;border:1px solid #a8a594;background:#fff"><div class="a" style="left:1px;top:3px;width:5px;height:1px;background:#000"></div></div><div class="a" style="left:74px;top:288px;width:5px;height:1px;background:repeating-linear-gradient(to right,#a09d8c 0,#a09d8c 1px,transparent 1px,transparent 2px)"></div><svg width="16" height="16" viewBox="0 0 16 16" style="left:79px;top:280px"><path d="M0.6 10.6 L7.6 14.6 L15.2 11.2 L9 8.2 Z" fill="#fff" stroke="#000" stroke-width="1.1"/><path d="M2.5 2.8 L5.8 4.4 V10.2 L2.5 8.6 Z" fill="#fff" stroke="#000" stroke-width="0.9"/><path d="M2.9 3.6 L5.4 4.9 V6.4 L2.9 5.1Z" fill="#30d8e8"/><path d="M6.2 5.2 L9.2 6.8 V12 L6.2 10.4 Z" fill="#fff" stroke="#000" stroke-width="0.9"/><path d="M6.6 8.6 L8.8 9.8 V11.2 L6.6 10Z" fill="#30d8e8"/><path d="M9.5 9.5 L13 11" fill="none" stroke="#30d8e8" stroke-width="1.4"/><path d="M8 5.5 L13 1" fill="none" stroke="#000" stroke-width="0.9"/><ellipse cx="13" cy="1.2" rx="1.3" ry="0.9" fill="#10c020" stroke="#000" stroke-width=".5"/><ellipse cx="10.2" cy="4.3" rx="1.3" ry="0.9" fill="#f0e800" stroke="#000" stroke-width=".5"/><ellipse cx="12.4" cy="6.8" rx="0.9" ry="1.3" fill="#e020e0" stroke="#000" stroke-width=".5"/></svg><div class="t ui" id="tr3" style="left:100.8px;top:281.9px;font-size:12px;-webkit-text-stroke:0;font-weight:bold;">VBAProject (印刷用<span class="k" style="width:35.03px"><span style="transform:translateY(0.7px) scale(0.973,1.12)">マクロ</span></span>.xl</div>
<div class="a" style="left:83px;top:300px;width:9px;height:9px;border:1px solid #a8a594;background:#fff"><div class="a" style="left:1px;top:3px;width:5px;height:1px;background:#000"></div></div><div class="a" style="left:93px;top:304px;width:6px;height:1px;background:repeating-linear-gradient(to right,#a09d8c 0,#a09d8c 1px,transparent 1px,transparent 2px)"></div><svg width="16" height="16" viewBox="0 0 16 16" style="left:99px;top:296px"><path d="M1.5 12.5 V4 L3 2.5 H6.5 L8 4.5 H13.5 V8" fill="#f8f490" stroke="#8a8a8a" stroke-width="1"/><path d="M0.8 8 H13 L14.5 13.5 H2.5 Z" fill="#f8f488" stroke="#7c7c7c" stroke-width="1"/><path d="M1 8.6 H12.6" fill="none" stroke="#fffff0" stroke-width="0.9"/><path d="M12 7.6 L14.6 12.8 L13.2 12.8 L11.6 9Z" fill="#000"/></svg><div class="t ui" id="tr4" style="left:118.8px;top:297.9px;font-size:12px;letter-spacing:-0.14px;">Microsoft Excel Objects</div>
<div class="a" style="left:107px;top:320px;width:10px;height:1px;background:repeating-linear-gradient(to right,#a09d8c 0,#a09d8c 1px,transparent 1px,transparent 2px)"></div><svg width="16" height="16" viewBox="0 0 16 16" style="left:117px;top:312px"><path d="M4.5 1.5 H12 L15.5 5 V14.5 H4.5 Z" fill="#fff" stroke="#000" stroke-width="1"/><path d="M12 1.5 V5 H15.5" fill="none" stroke="#000" stroke-width="0.8"/><path d="M5 15 H15.7 M15.7 5.5 V15" fill="none" stroke="#000" stroke-width="1.2"/><rect x="1" y="2.5" width="10.5" height="9.5" fill="#fff"/><path d="M1 3 H11.5 M1 5.3 H11.5 M1 7.5 H11.5 M1 9.7 H11.5 M1 12 H11.5" fill="none" stroke="#000" stroke-width="1.25"/><path d="M1.6 2.4 V12.6 M4.8 2.4 V12.6 M8 2.4 V12.6 M11 2.4 V12.6" fill="none" stroke="#000" stroke-width="1.25"/></svg><div class="t ui" id="tr5" style="left:138.0px;top:313.9px;font-size:12px;letter-spacing:-0.20px;">Sheet1 (名簿)</div>
<div class="a" style="left:107px;top:336px;width:10px;height:1px;background:repeating-linear-gradient(to right,#a09d8c 0,#a09d8c 1px,transparent 1px,transparent 2px)"></div><svg width="16" height="16" viewBox="0 0 16 16" style="left:117px;top:328px"><path d="M4.5 1.5 H12 L15.5 5 V14.5 H4.5 Z" fill="#fff" stroke="#000" stroke-width="1"/><path d="M12 1.5 V5 H15.5" fill="none" stroke="#000" stroke-width="0.8"/><path d="M5 15 H15.7 M15.7 5.5 V15" fill="none" stroke="#000" stroke-width="1.2"/><rect x="1" y="2.5" width="10.5" height="9.5" fill="#fff"/><path d="M1 3 H11.5 M1 5.3 H11.5 M1 7.5 H11.5 M1 9.7 H11.5 M1 12 H11.5" fill="none" stroke="#000" stroke-width="1.25"/><path d="M1.6 2.4 V12.6 M4.8 2.4 V12.6 M8 2.4 V12.6 M11 2.4 V12.6" fill="none" stroke="#000" stroke-width="1.25"/></svg><div class="t ui" id="tr6" style="left:138.0px;top:329.9px;font-size:12px;letter-spacing:-0.27px;">Sheet2 (印刷用)</div>
<div class="a" style="left:107px;top:352px;width:10px;height:1px;background:repeating-linear-gradient(to right,#a09d8c 0,#a09d8c 1px,transparent 1px,transparent 2px)"></div><svg width="16" height="16" viewBox="0 0 16 16" style="left:117px;top:344px"><path d="M4.5 1.5 H12 L15.5 5 V14.5 H4.5 Z" fill="#fff" stroke="#000" stroke-width="1"/><path d="M12 1.5 V5 H15.5" fill="none" stroke="#000" stroke-width="0.8"/><path d="M5 15 H15.7 M15.7 5.5 V15" fill="none" stroke="#000" stroke-width="1.2"/><rect x="1" y="2.5" width="10.5" height="9.5" fill="#fff"/><path d="M1 3 H11.5 M1 5.3 H11.5 M1 7.5 H11.5 M1 9.7 H11.5 M1 12 H11.5" fill="none" stroke="#000" stroke-width="1.25"/><path d="M1.6 2.4 V12.6 M4.8 2.4 V12.6 M8 2.4 V12.6 M11 2.4 V12.6" fill="none" stroke="#000" stroke-width="1.25"/></svg><div class="t ui" id="tr7" style="left:138.0px;top:345.9px;font-size:12px;">Sheet3 (<span class="k" style="width:46.02px"><span style="transform:translateY(0.7px) scale(0.767,1.12)">ツールバー</span></span>)</div>
<div class="a" style="left:107px;top:368px;width:10px;height:1px;background:repeating-linear-gradient(to right,#a09d8c 0,#a09d8c 1px,transparent 1px,transparent 2px)"></div><svg width="16" height="16" viewBox="0 0 16 16" style="left:117px;top:360px"><path d="M4.5 1.5 H12 L15.5 5 V14.5 H4.5 Z" fill="#fff" stroke="#000" stroke-width="1"/><path d="M12 1.5 V5 H15.5" fill="none" stroke="#000" stroke-width="0.8"/><path d="M5 15 H15.7 M15.7 5.5 V15" fill="none" stroke="#000" stroke-width="1.2"/><rect x="1" y="2.5" width="10.5" height="9.5" fill="#fff"/><path d="M1 3 H11.5 M1 5.3 H11.5 M1 7.5 H11.5 M1 9.7 H11.5 M1 12 H11.5" fill="none" stroke="#000" stroke-width="1.25"/><path d="M1.6 2.4 V12.6 M4.8 2.4 V12.6 M8 2.4 V12.6 M11 2.4 V12.6" fill="none" stroke="#000" stroke-width="1.25"/></svg><div class="t ui" id="tr8" style="left:138.0px;top:361.9px;font-size:12px;transform:scaleX(0.8754);transform-origin:0 50%;">Sheet4 (メモ)</div>
<div class="a" style="left:107px;top:384px;width:10px;height:1px;background:repeating-linear-gradient(to right,#a09d8c 0,#a09d8c 1px,transparent 1px,transparent 2px)"></div><svg width="15" height="16" viewBox="0 0 15 16" style="left:117px;top:376px"><path d="M3.5 1.5 H10 L13.5 5 V14.5 H3.5 Z" fill="#fff" stroke="#000" stroke-width="1"/><path d="M10 1.5 V5 H13.5" fill="none" stroke="#000" stroke-width="1"/><path d="M1 6.5 L8 12.5 M8 6.5 L1 12.5" fill="none" stroke="#108020" stroke-width="2.4"/></svg><div class="t ui" id="tr9" style="left:139.0px;top:377.9px;font-size:12px;transform:scaleX(0.8950);transform-origin:0 50%;">ThisWorkbook</div>
<div class="a" style="left:83px;top:396px;width:9px;height:9px;border:1px solid #a8a594;background:#fff"><div class="a" style="left:1px;top:3px;width:5px;height:1px;background:#000"></div></div><div class="a" style="left:93px;top:400px;width:6px;height:1px;background:repeating-linear-gradient(to right,#a09d8c 0,#a09d8c 1px,transparent 1px,transparent 2px)"></div><svg width="16" height="16" viewBox="0 0 16 16" style="left:99px;top:392px"><path d="M1.5 12.5 V4 L3 2.5 H6.5 L8 4.5 H13.5 V8" fill="#f8f490" stroke="#8a8a8a" stroke-width="1"/><path d="M0.8 8 H13 L14.5 13.5 H2.5 Z" fill="#f8f488" stroke="#7c7c7c" stroke-width="1"/><path d="M1 8.6 H12.6" fill="none" stroke="#fffff0" stroke-width="0.9"/><path d="M12 7.6 L14.6 12.8 L13.2 12.8 L11.6 9Z" fill="#000"/></svg><div class="t ui" id="tr10" style="left:119.0px;top:393.9px;font-size:12px;">標準<span class="k" style="width:47.00px"><span style="transform:translateY(0.7px) scale(0.783,1.12)">モジュール</span></span></div>
<div class="a" style="left:107px;top:416px;width:10px;height:1px;background:repeating-linear-gradient(to right,#a09d8c 0,#a09d8c 1px,transparent 1px,transparent 2px)"></div><svg width="17" height="16" viewBox="0 0 17 16" style="left:117px;top:409px"><g transform="scale(.92)"><path d="M10 8 L8 3 M10 8 L13 3 M10 8 L3 9.5 M10 8 L15 9 M10 8 L12.3 14" fill="none" stroke="#000" stroke-width="1.1"/><path d="M4 8.2 L10 6 M10 6.5 L12.5 11.5 M8.5 5 L12 5" fill="none" stroke="#20d0d8" stroke-width="1"/><ellipse cx="8" cy="2.6" rx="1.3" ry="2.4" fill="#f0e800" stroke="#000" stroke-width=".7" transform="rotate(-12 8 2.6)"/><ellipse cx="13.2" cy="2.6" rx="1.3" ry="2.4" fill="#e020e0" stroke="#000" stroke-width=".7" transform="rotate(22 13.2 2.6)"/><ellipse cx="2.6" cy="9.4" rx="2" ry="1.5" fill="#e020e0" stroke="#000" stroke-width=".7" transform="rotate(-25 2.6 9.4)"/><ellipse cx="7.4" cy="8.8" rx="1.7" ry="1.2" fill="#10b020" stroke="#000" stroke-width=".5"/><ellipse cx="13.8" cy="9" rx="1.6" ry="1.1" fill="#20d0d8" stroke="#000" stroke-width=".5"/><rect x="15.4" y="8.3" width="1.4" height="1.4" fill="#000"/><ellipse cx="12.4" cy="13.6" rx="1.4" ry="2" fill="#f0e800" stroke="#000" stroke-width=".7" transform="rotate(25 12.4 13.6)"/><rect x="11.2" y="15.4" width="1.5" height="1.2" fill="#000"/></g></svg><div class="a" style="left:136px;top:408px;width:46px;height:16px;background:#ece8da"></div><div class="t ui" id="tr11" style="left:139.0px;top:409.9px;font-size:12px;transform:scaleX(0.8227);transform-origin:0 50%;">Module1</div>
<div class="a" style="left:107px;top:432px;width:10px;height:1px;background:repeating-linear-gradient(to right,#a09d8c 0,#a09d8c 1px,transparent 1px,transparent 2px)"></div><svg width="17" height="16" viewBox="0 0 17 16" style="left:117px;top:425px"><g transform="scale(.92)"><path d="M10 8 L8 3 M10 8 L13 3 M10 8 L3 9.5 M10 8 L15 9 M10 8 L12.3 14" fill="none" stroke="#000" stroke-width="1.1"/><path d="M4 8.2 L10 6 M10 6.5 L12.5 11.5 M8.5 5 L12 5" fill="none" stroke="#20d0d8" stroke-width="1"/><ellipse cx="8" cy="2.6" rx="1.3" ry="2.4" fill="#f0e800" stroke="#000" stroke-width=".7" transform="rotate(-12 8 2.6)"/><ellipse cx="13.2" cy="2.6" rx="1.3" ry="2.4" fill="#e020e0" stroke="#000" stroke-width=".7" transform="rotate(22 13.2 2.6)"/><ellipse cx="2.6" cy="9.4" rx="2" ry="1.5" fill="#e020e0" stroke="#000" stroke-width=".7" transform="rotate(-25 2.6 9.4)"/><ellipse cx="7.4" cy="8.8" rx="1.7" ry="1.2" fill="#10b020" stroke="#000" stroke-width=".5"/><ellipse cx="13.8" cy="9" rx="1.6" ry="1.1" fill="#20d0d8" stroke="#000" stroke-width=".5"/><rect x="15.4" y="8.3" width="1.4" height="1.4" fill="#000"/><ellipse cx="12.4" cy="13.6" rx="1.4" ry="2" fill="#f0e800" stroke="#000" stroke-width=".7" transform="rotate(25 12.4 13.6)"/><rect x="11.2" y="15.4" width="1.5" height="1.2" fill="#000"/></g></svg><div class="t ui" id="tr12" style="left:136.5px;top:425.9px;font-size:12px;">印刷<span class="k" style="width:21.00px"><span style="transform:translateY(0.7px) scale(0.875,1.12)">する</span></span></div>
<div class="a" style="left:62px;top:466px;width:216px;height:286px;background:#fff;border:1px solid #000;border-left-color:#000"></div><div class="a" style="left:63px;top:467px;width:2px;height:284px;background:#8c8978"></div><div class="a" style="left:275px;top:467px;width:2px;height:284px;background:#f1efe2"></div><div class="a" style="left:65px;top:749px;width:212px;height:2px;background:#f1efe2"></div><div class="a" style="left:281px;top:466px;width:1px;height:288px;background:#8c8978"></div><div class="a" style="left:58px;top:752px;width:224px;height:2px;background:linear-gradient(to bottom,#fff,#d8d4c0)"></div>

<!-- MDI client + code window -->
<div class="a" style="left:288px;top:184px;width:899px;height:570px;border-top:2px solid #8a8778;border-left:2px solid #8a8778;border-right:1px solid #fff;border-bottom:1px solid #fff;background:#ece8da"></div>
<div class="a" style="left:300px;top:188px;width:432px;height:20px;background:#fff;border:2px solid;border-color:#8a8778 #f4f2e8 #f4f2e8 #8a8778"></div><div class="btn" style="left:714px;top:190px;width:16px;height:16px"><svg width="7" height="4" style="left:3px;top:5px"><path d="M0 0h7l-3.5 4z" fill="#000"/></svg></div><div class="t ui" id="cb1" style="left:305.3px;top:190.8px;font-size:12px;letter-spacing:0.35px;-webkit-text-stroke:0;font-weight:bold;">(General)</div><div class="a" style="left:744px;top:188px;width:431px;height:20px;background:#fff;border:2px solid;border-color:#8a8778 #f4f2e8 #f4f2e8 #8a8778"></div><div class="btn" style="left:1157px;top:190px;width:16px;height:16px"><svg width="7" height="4" style="left:3px;top:5px"><path d="M0 0h7l-3.5 4z" fill="#000"/></svg></div><div class="t ui" id="cb2" style="left:747.0px;top:191.7px;font-size:12px;letter-spacing:1.00px;-webkit-text-stroke:0;font-weight:bold;-webkit-text-stroke:0.45px #000;">帳票印刷</div>
<div class="a" style="left:290px;top:210px;width:896px;height:543px;border-top:2px solid #8a8778;border-left:2px solid #8a8778;border-right:1px solid #fff;border-bottom:1px solid #fff;background:#fff"></div><div class="a beige" style="left:292px;top:212px;width:20px;height:523px"></div><div class="a" style="left:312px;top:212px;width:1px;height:523px;background:#000"></div><div class="a" style="left:313px;top:226px;width:855px;height:1px;background:#5a5a5a"></div>
<div class="a" style="left:1168px;top:212px;width:17px;height:523px;background:#f6f4ec"></div><div class="a beige" style="left:1168px;top:212px;width:17px;height:6px;border-left:1px solid #f7f6ee;border-right:1px solid #716f64"></div><div class="a" style="left:1168px;top:218px;width:17px;height:1px;background:#000"></div><div class="btn" style="left:1168px;top:219px;width:17px;height:16px"><svg width="7" height="4" style="left:4px;top:5px"><path d="M0 4h7l-3.5 -4z" fill="#000"/></svg></div><div class="btn" style="left:1168px;top:235px;width:17px;height:483px"></div><div class="btn" style="left:1168px;top:719px;width:17px;height:16px"><svg width="7" height="4" style="left:4px;top:6px"><path d="M0 0h7l-3.5 4z" fill="#000"/></svg></div><div class="a" style="left:292px;top:735px;width:876px;height:17px;background:#f6f4ec"></div><div class="btn" style="left:292px;top:735px;width:17px;height:17px"><div class="a" style="left:3px;top:3px;width:9px;height:1px;background:#000;box-shadow:2px 2px 0 #000"></div></div><div class="a" style="left:309px;top:735px;width:17px;height:17px;background:#f6f4ec;border:1px solid;border-color:#716f64 #fff #fff #716f64"><div class="a" style="left:3px;top:3px;width:9px;height:1px;background:#000;box-shadow:1px 2px 0 #000,0 4px 0 #000,1px 6px 0 #000,0 8px 0 #000"></div></div><div class="btn" style="left:326px;top:735px;width:17px;height:17px"><svg width="4" height="7" style="left:5px;top:4px"><path d="M4 0v7l-4 -3.5z" fill="#000"/></svg></div><div class="btn" style="left:343px;top:735px;width:95px;height:17px"></div><div class="btn" style="left:1152px;top:735px;width:17px;height:17px"><svg width="4" height="7" style="left:6px;top:4px"><path d="M0 0v7l4 -3.5z" fill="#000"/></svg></div><div class="a beige" style="left:1169px;top:735px;width:16px;height:17px"></div>
<div class="code" style="left:324.6px;top:216.2px"><b>Option Explicit</b></div>
<div class="code" style="left:324.6px;top:242.2px"><b>Sub</b> <i>帳票印刷</i>()</div>
<div class="code" style="left:324.6px;top:255.2px">    <b>Dim</b> LastRow <b>As Long</b></div>
<div class="code" style="left:324.6px;top:268.2px">    <b>Dim</b> i <b>As Long</b></div>
<div class="code" style="left:324.6px;top:281.2px">    <b>Dim</b> myNo <b>As Long</b></div>
<div class="code" style="left:324.6px;top:307.2px">    <b>With</b> Worksheets("<i>名簿</i>")</div>
<div class="code" style="left:324.6px;top:333.2px">        LastRow = .Cells(.Rows.Count, "A").End(xlUp).Row</div>
<div class="code" style="left:324.6px;top:359.2px">        For i = 2 To LastRow</div>
<div class="code" style="left:324.6px;top:372.2px">            myNo = .Range("A" &amp; i).Value</div>
<div class="code" style="left:324.6px;top:398.2px">            <b>With</b> Worksheets("<i>印刷用</i>")</div>
<div class="code" style="left:324.6px;top:411.2px">                .Range("C4").Value = myNo</div>
<div class="code" style="left:324.6px;top:424.2px">                .PrintPreview</div>
<div class="code" style="left:324.6px;top:437.2px">            <b>End With</b></div>
<div class="code" style="left:324.6px;top:450.2px">        <b>Next</b> i</div>
<div class="code" style="left:324.6px;top:476.2px">    <b>End With</b></div>
<div class="code" style="left:324.6px;top:502.2px"><b>End Sub</b></div>

<!-- callout -->
<svg width="400" height="240" style="left:0;top:350px" viewBox="0 350 400 240"><path d="M43 466 L182 466 L378 363 L250 466 L276 466 A19 19 0 0 1 295 485 L295 558 A19 19 0 0 1 276 577 L43 577 A19 19 0 0 1 24 558 L24 485 A19 19 0 0 1 43 466 Z" fill="#fff" stroke="#0000ff" stroke-width="2" stroke-linejoin="miter"/></svg>
<div class="t" id="bl0" style="left:32.0px;top:474.8px;font-size:13.3px;">対<span class="k" style="width:242.39px"><span style="transform:scale(1.012,1)">になっているものがはっきりわかるよう</span></span></div>
<div class="t" id="bl1" style="left:31.8px;top:492.2px;font-size:13.3px;"><span class="k" style="width:183.50px"><span style="transform:scale(0.920,1)">に、「インデント」をつけます。</span></span></div>
<div class="t" id="bl2" style="left:31.8px;top:509.6px;font-size:13.3px;"><span class="k" style="width:107.02px"><span style="transform:scale(1.006,1)">インデントとは、</span></span>繰<span class="k" style="width:13.38px"><span style="transform:scale(1.006,1)">り</span></span>返<span class="k" style="width:26.75px"><span style="transform:scale(1.006,1)">しや</span></span>条件選択<span class="k" style="width:26.75px"><span style="transform:scale(1.006,1)">のま</span></span></div>
<div class="t" id="bl3" style="left:30.0px;top:526.7px;font-size:13.3px;"><span class="k" style="width:56.87px"><span style="transform:scale(1.069,1)">とまりを</span></span>示<span class="k" style="width:56.87px"><span style="transform:scale(1.069,1)">すために</span></span>行<span class="k" style="width:14.22px"><span style="transform:scale(1.069,1)">の</span></span>先頭<span class="k" style="width:14.22px"><span style="transform:scale(1.069,1)">を</span></span>下<span class="k" style="width:28.43px"><span style="transform:scale(1.069,1)">げる</span></span>(右</div>
<div class="t" id="bl4" style="left:30.8px;top:544.0px;font-size:13.3px;"><span class="k" style="width:55.84px"><span style="transform:scale(1.050,1)">にずらす</span></span>)<span class="k" style="width:69.81px"><span style="transform:scale(1.050,1)">ことです。</span></span></div>

<!-- outer green border -->
<div class="a" style="left:0;top:0;width:1207px;height:777px;border:2px solid #99cc00;pointer-events:none"></div>
</div>
</body></html>
